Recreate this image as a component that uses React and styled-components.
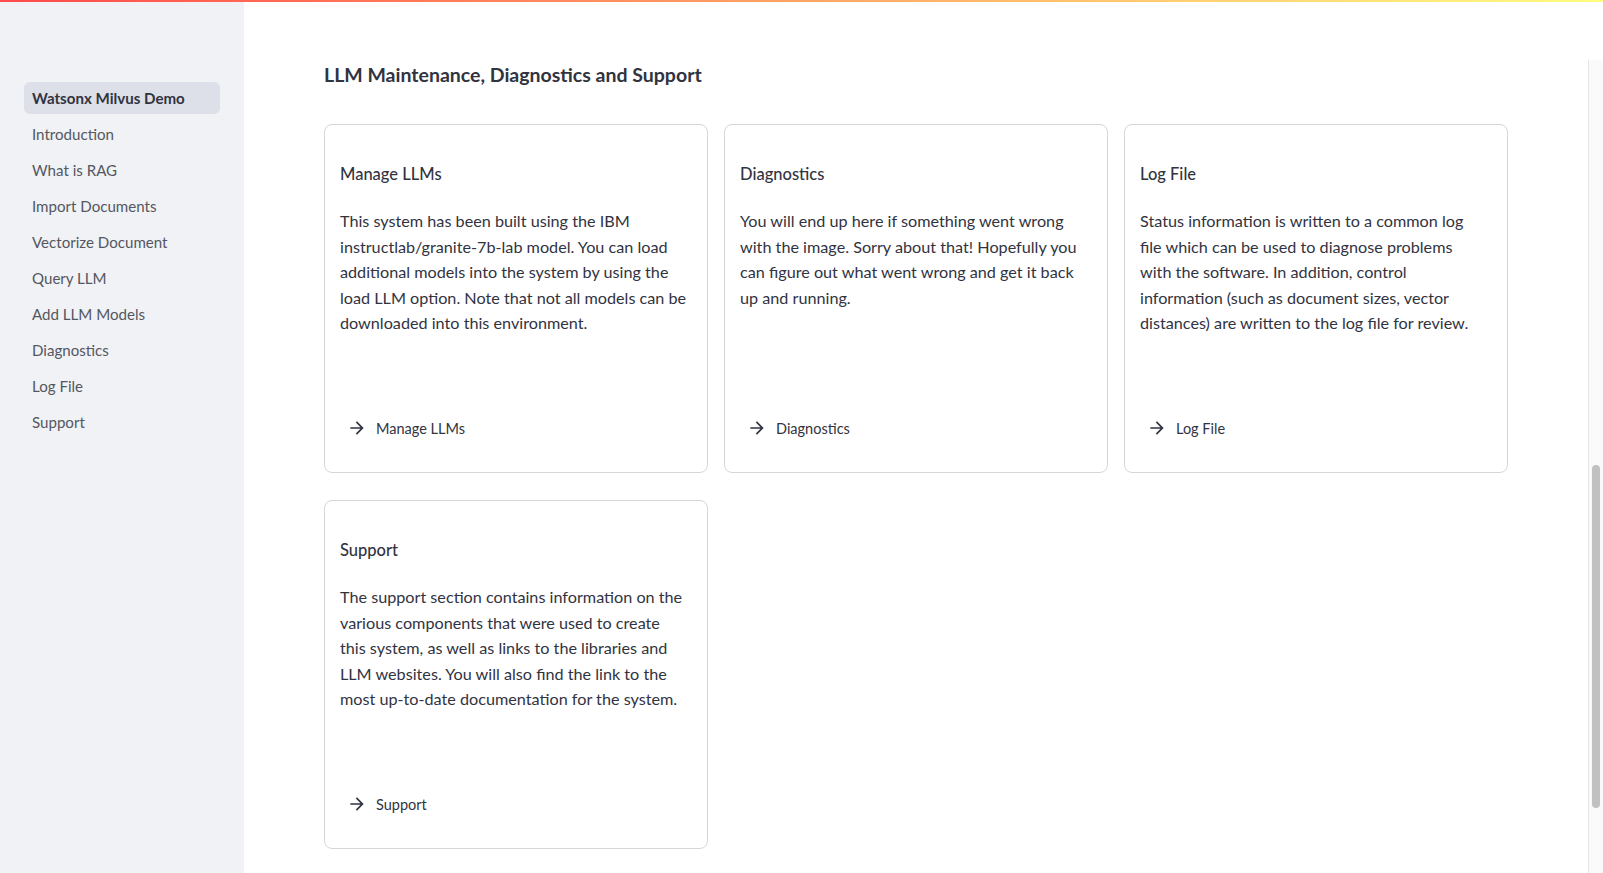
import React from 'react'
import styled, { createGlobalStyle } from 'styled-components'

const GlobalStyle = createGlobalStyle`
  html, body {
    margin: 0;
    padding: 0;
    height: 100%;
    overflow: hidden;
  }
  body {
    font-family: Lato, "Open Sans", sans-serif;
    color: #31333f;
    background: #ffffff;
  }
  * {
    box-sizing: border-box;
  }
`

///////////////////////////////////////////////////////
const Page = styled.div`
  display: flex;
  flex-direction: column;
  width: 100vw;
  height: 100vh;
`

const Decoration = styled.div`
  height: 2px;
  flex-shrink: 0;
  background: linear-gradient(90deg, #ff4b4b, #fffd80);
`

const Body = styled.div`
  display: flex;
  flex: 1;
  min-height: 0;
`

///////////////////////////////////////////////////////
const Sidebar = styled.nav`
  width: 244px;
  flex-shrink: 0;
  background: #f0f2f6;
  padding: 80px 24px 0;
  display: flex;
  flex-direction: column;
  gap: 4px;
`

const NavItem = styled.a`
  display: flex;
  align-items: center;
  height: 32px;
  padding: 0 8px;
  border-radius: 6px;
  font-size: 15.1px;
  text-decoration: none;
  cursor: pointer;
  color: ${(p) => (p.$active ? '#31333f' : '#55575f')};
  font-weight: ${(p) => (p.$active ? 700 : 400)};
  background: ${(p) => (p.$active ? '#dde0e8' : 'transparent')};
`

///////////////////////////////////////////////////////
const Main = styled.main`
  flex: 1;
  padding: 61px 80px 0;
`

const Heading = styled.h2`
  margin: 0 0 37px;
  font-size: 19.5px;
  line-height: 24px;
  font-weight: 700;
  color: #31333f;
`

const Grid = styled.div`
  display: grid;
  grid-template-columns: repeat(3, 384px);
  gap: 27px 16px;
`

const Card = styled.div`
  height: 349px;
  border: 1px solid #d6d6d9;
  border-radius: 8px;
  padding: 36px 20.5px 32px 15px;
  display: flex;
  flex-direction: column;
`

const CardTitle = styled.div`
  font-size: 16.5px;
  line-height: 26px;
  font-weight: 500;
  color: #31333f;
  margin-bottom: 21px;
`

const CardText = styled.p`
  margin: 0;
  font-size: 16.2px;
  line-height: 25.6px;
  color: #31333f;
`

const CardLink = styled.a`
  margin-top: auto;
  display: flex;
  align-items: center;
  gap: 9px;
  height: 24px;
  font-size: 14.5px;
  color: #31333f;
  cursor: pointer;
  text-decoration: none;

  svg {
    margin-left: 7px;
  }
`

///////////////////////////////////////////////////////
const ScrollTrack = styled.div`
  width: 15px;
  flex-shrink: 0;
  display: flex;
  flex-direction: column;
  padding-top: 58px;
`

const Track = styled.div`
  flex: 1;
  background: #fafafa;
  border-left: 1px solid #e6e6e6;
  padding: 405px 3px 0 3px;
`

const Thumb = styled.div`
  height: 343px;
  border-radius: 4px;
  background: #c1c1c1;
`

const Arrow = () => (
  <svg width="20" height="20" viewBox="0 0 24 24" fill="#31333f">
    <path d="M12 4l-1.41 1.41L16.17 11H4v2h12.17l-5.58 5.59L12 20l8-8z" />
  </svg>
)

const navItems = [
  'Watsonx Milvus Demo',
  'Introduction',
  'What is RAG',
  'Import Documents',
  'Vectorize Document',
  'Query LLM',
  'Add LLM Models',
  'Diagnostics',
  'Log File',
  'Support',
]

const cards = [
  {
    title: 'Manage LLMs',
    text: 'This system has been built using the IBM instructlab/granite-7b-lab model. You can load additional models into the system by using the load LLM option. Note that not all models can be downloaded into this environment.',
  },
  {
    title: 'Diagnostics',
    text: 'You will end up here if something went wrong with the image. Sorry about that! Hopefully you can figure out what went wrong and get it back up and running.',
  },
  {
    title: 'Log File',
    text: 'Status information is written to a common log file which can be used to diagnose problems with the software. In addition, control information (such as document sizes, vector distances) are written to the log file for review.',
  },
  {
    title: 'Support',
    text: 'The support section contains information on the various components that were used to create this system, as well as links to the libraries and LLM websites. You will also find the link to the most up-to-date documentation for the system.',
  },
]

const App = () => {
  return (
    <>
      <GlobalStyle />
      <Page>
        <Decoration />
        <Body>
          <Sidebar>
            {navItems.map((item, i) => (
              <NavItem key={item} $active={i === 0}>{item}</NavItem>
            ))}
          </Sidebar>
          <Main>
            <Heading>LLM Maintenance, Diagnostics and Support</Heading>
            <Grid>
              {cards.map((c) => (
                <Card key={c.title}>
                  <CardTitle>{c.title}</CardTitle>
                  <CardText>{c.text}</CardText>
                  <CardLink>
                    <Arrow />
                    {c.title}
                  </CardLink>
                </Card>
              ))}
            </Grid>
          </Main>
          <ScrollTrack>
            <Track>
              <Thumb />
            </Track>
          </ScrollTrack>
        </Body>
      </Page>
    </>
  )
}

export default App
